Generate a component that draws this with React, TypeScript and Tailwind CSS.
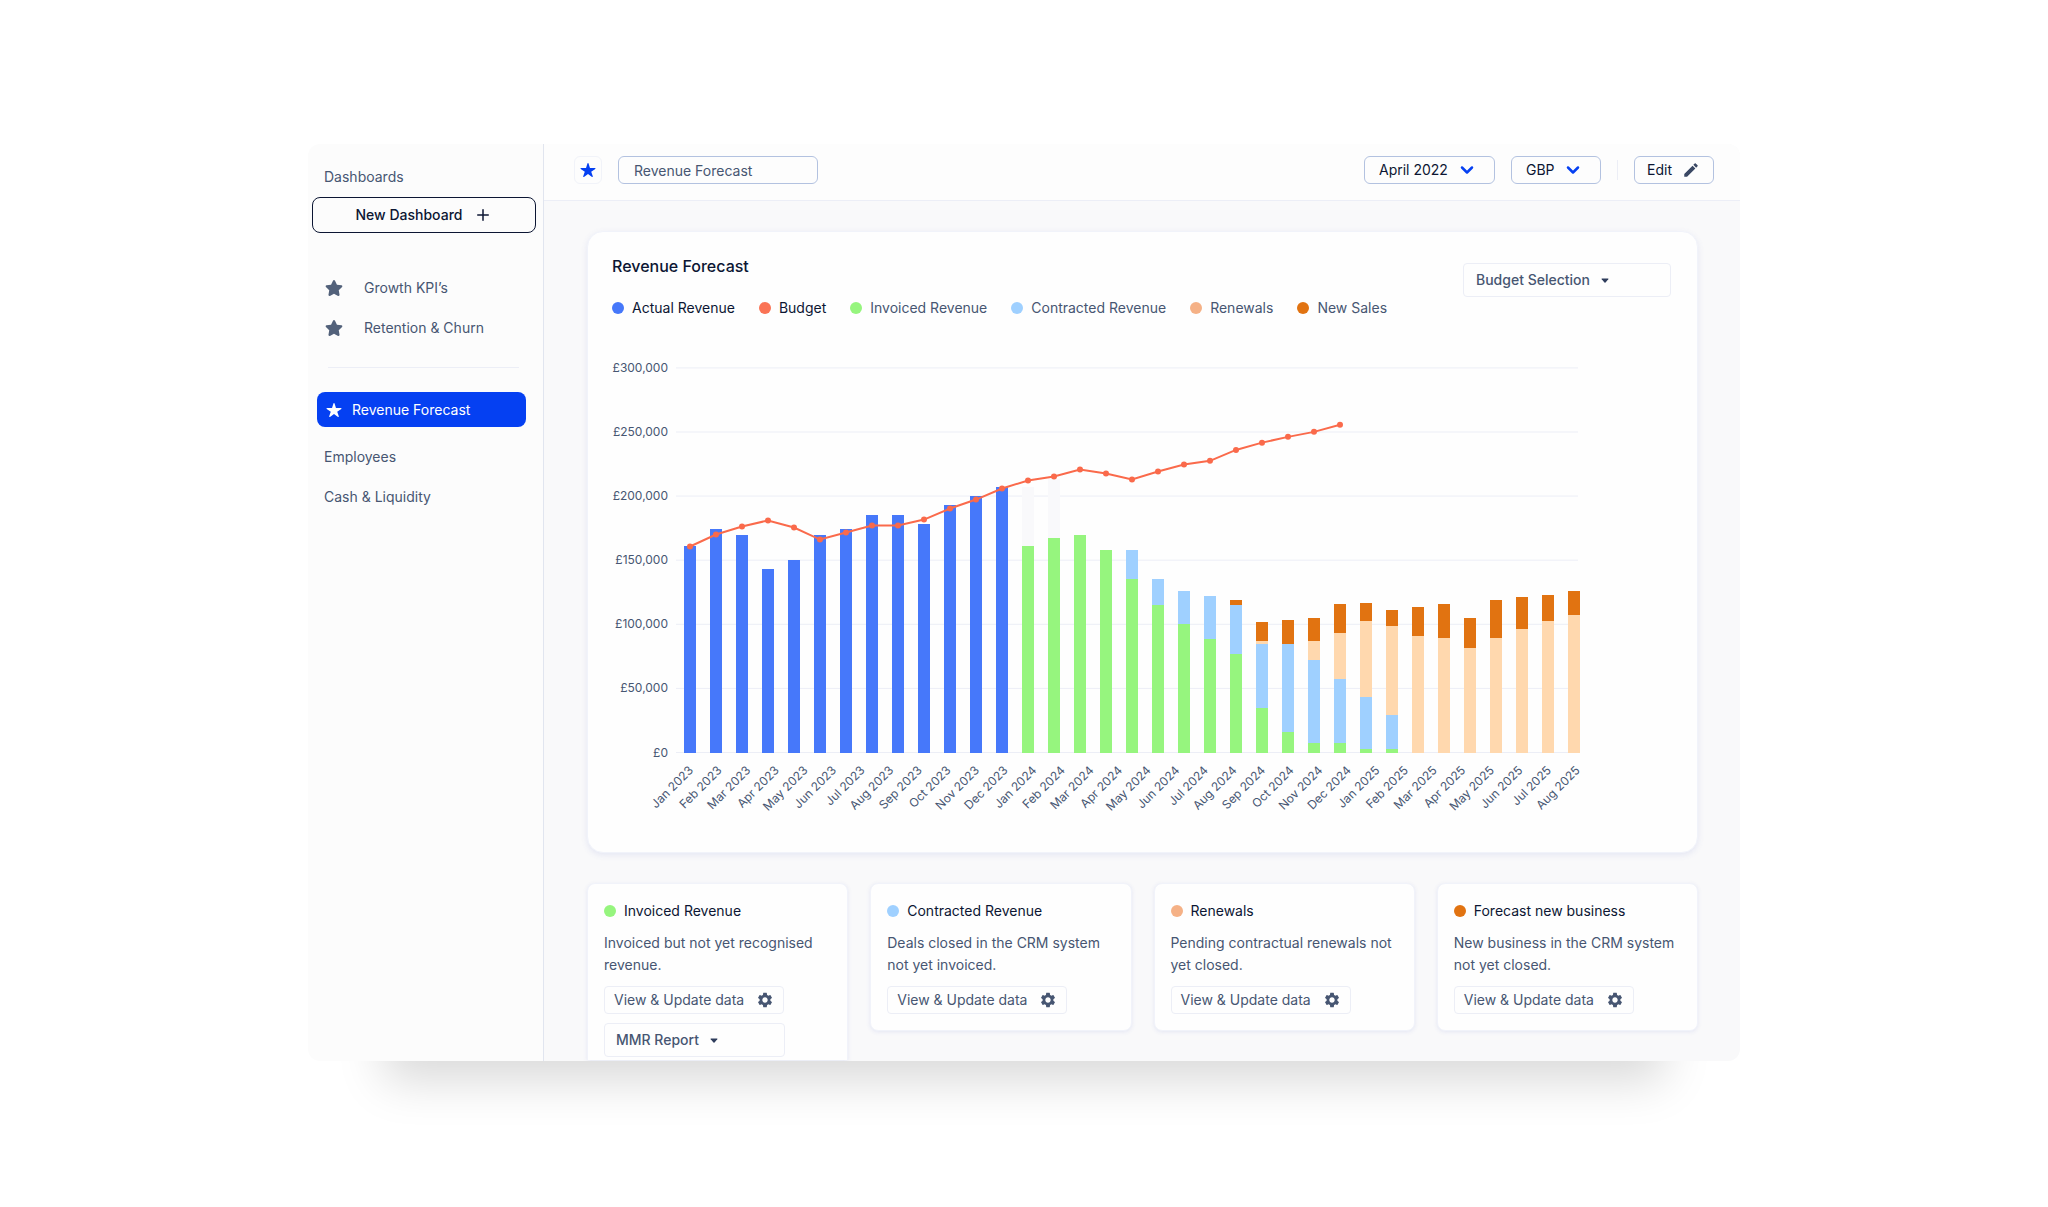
import { ChevronDown, Plus } from "lucide-react";
import { FaStar } from "react-icons/fa";
import { IoStar } from "react-icons/io5";
import { MdEdit, MdSettings } from "react-icons/md";

type Bar = {
  actual?: number;
  invoiced?: number;
  contracted?: number;
  renewals?: number;
  sales?: number;
  ghost?: number;
};

// Values are the top of each stacked segment, in thousands of pounds.
const BARS: Bar[] = [
  { actual: 160.7 },
  { actual: 174.5 },
  { actual: 170 },
  { actual: 143.5 },
  { actual: 150.5 },
  { actual: 170 },
  { actual: 174.7 },
  { actual: 184.9 },
  { actual: 184.9 },
  { actual: 178.6 },
  { actual: 193.4 },
  { actual: 199.7 },
  { actual: 207.2 },
  { invoiced: 160.7, ghost: 207 },
  { invoiced: 167.7, ghost: 213 },
  { invoiced: 169.3 },
  { invoiced: 157.6 },
  { invoiced: 135.5, contracted: 157.6 },
  { invoiced: 114.7, contracted: 135.7 },
  { invoiced: 100.4, contracted: 125.6 },
  { invoiced: 88.7, contracted: 121.7 },
  { invoiced: 77.2, contracted: 114.7, sales: 118.6 },
  { invoiced: 34.8, contracted: 85, renewals: 86.6, sales: 101.7 },
  { invoiced: 16, contracted: 85, sales: 103.7 },
  { invoiced: 7.5, contracted: 72.3, renewals: 86.6, sales: 105.3 },
  { invoiced: 7.5, contracted: 57.7, renewals: 93.6, sales: 116.2 },
  { invoiced: 3, contracted: 43.4, renewals: 102.2, sales: 117 },
  { invoiced: 3, contracted: 29, renewals: 99, sales: 111.5 },
  { renewals: 91, sales: 113.6 },
  { renewals: 89.4, sales: 116 },
  { renewals: 81.6, sales: 105 },
  { renewals: 89.4, sales: 119 },
  { renewals: 96.5, sales: 121.4 },
  { renewals: 102.7, sales: 123 },
  { renewals: 107.4, sales: 125.6 },
];

const BUDGET = [
  160.7, 170, 176.3, 181, 175.5, 166.1, 171.6, 177, 177, 181.7, 190.3, 197.3, 205.9,
  212.2, 215.3, 220.7, 217.6, 213, 219.2, 224.6, 227.5, 236, 241.7, 246.2, 250.1, 255.6,
];

const MONTHS = [
  "Jan 2023", "Feb 2023", "Mar 2023", "Apr 2023", "May 2023", "Jun 2023", "Jul 2023", "Aug 2023",
  "Sep 2023", "Oct 2023", "Nov 2023", "Dec 2023", "Jan 2024", "Feb 2024", "Mar 2024", "Apr 2024",
  "May 2024", "Jun 2024", "Jul 2024", "Aug 2024", "Sep 2024", "Oct 2024", "Nov 2024", "Dec 2024",
  "Jan 2025", "Feb 2025", "Mar 2025", "Apr 2025", "May 2025", "Jun 2025", "Jul 2025", "Aug 2025",
];

const TICKS = [300, 250, 200, 150, 100, 50, 0];

// Drawn from tallest to shortest so that each segment covers the one behind it.
const STACK = [
  { key: "ghost", fill: "#f9f9fb" },
  { key: "sales", fill: "#e17311" },
  { key: "renewals", fill: "#ffd8ae" },
  { key: "contracted", fill: "#9fd0ff" },
  { key: "invoiced", fill: "#96f57e" },
  { key: "actual", fill: "#4678fa" },
] as const;

const LEGEND = [
  { label: "Actual Revenue", dot: "bg-[#4678fa]", text: "text-[#0c1633]" },
  { label: "Budget", dot: "bg-[#fa7355]", text: "text-[#0c1633]" },
  { label: "Invoiced Revenue", dot: "bg-[#96f57e]", text: "text-[#475672]" },
  { label: "Contracted Revenue", dot: "bg-[#9fd0ff]", text: "text-[#475672]" },
  { label: "Renewals", dot: "bg-[#f5b186]", text: "text-[#475672]" },
  { label: "New Sales", dot: "bg-[#e17311]", text: "text-[#475672]" },
];

const CARDS = [
  {
    title: "Invoiced Revenue",
    dot: "bg-[#96f57e]",
    body: "Invoiced but not yet recognised revenue.",
    report: true,
  },
  {
    title: "Contracted Revenue",
    dot: "bg-[#9fd0ff]",
    body: "Deals closed in the CRM system not yet invoiced.",
  },
  {
    title: "Renewals",
    dot: "bg-[#f5b186]",
    body: "Pending contractual renewals not yet closed.",
  },
  {
    title: "Forecast new business",
    dot: "bg-[#e17311]",
    body: "New business in the CRM system not yet closed.",
  },
];

const yOf = (value: number) => 402.5 - value * 1.282;
const xOf = (index: number) => 78 + index * 26;

function RevenueChart() {
  return (
    <svg
      viewBox="0 0 1059 480"
      className="mt-8 block h-auto w-full"
      role="img"
      aria-label="Revenue forecast by month"
    >
      {TICKS.map((tick) => (
        <g key={tick}>
          <line x1={64} x2={966} y1={yOf(tick)} y2={yOf(tick)} stroke="#eceef6" />
          <text x={56} y={yOf(tick) + 4} textAnchor="end" fontSize={12} fill="#475672">
            {tick === 0 ? "£0" : `£${tick},000`}
          </text>
        </g>
      ))}
      {BARS.map((bar, i) => (
        <g key={i} shapeRendering="crispEdges">
          {STACK.map(({ key, fill }) => {
            const value = bar[key];
            if (value === undefined) return null;
            return (
              <rect
                key={key}
                x={xOf(i) - 6}
                y={yOf(value)}
                width={12}
                height={403 - yOf(value)}
                fill={fill}
              />
            );
          })}
        </g>
      ))}
      <polyline
        points={BUDGET.map((value, i) => `${xOf(i)},${yOf(value)}`).join(" ")}
        fill="none"
        stroke="#fa6a4b"
        strokeWidth={2}
      />
      {BUDGET.map((value, i) => (
        <circle key={i} cx={xOf(i)} cy={yOf(value)} r={3} fill="#fa6a4b" />
      ))}
      {MONTHS.map((month, i) => (
        <text
          key={month}
          transform={`translate(${82 + i * 28.6} 421) rotate(-45)`}
          textAnchor="end"
          fontSize={12}
          fill="#475672"
        >
          {month}
        </text>
      ))}
    </svg>
  );
}

function Caret({ className }: { className: string }) {
  return (
    <svg viewBox="0 0 8 5" className={`pointer-events-none absolute h-[5px] w-2 ${className}`}>
      <path d="M1 .5h6a.5.5 0 0 1 .3.8L4.5 4.4a.7.7 0 0 1-1 0L.7 1.3A.5.5 0 0 1 1 .5Z" fill="#2f3d5c" />
    </svg>
  );
}

function Sidebar() {
  return (
    <aside className="w-[236px] shrink-0 border-r border-[#e1e5ef] bg-[#fcfcfc] pt-[23px] text-sm leading-5 text-[#475672]">
      <h2 className="pl-4">Dashboards</h2>
      <button
        type="button"
        className="mt-[10px] ml-1 flex h-9 w-56 items-center justify-center gap-3 rounded-lg border border-[#0c1633] font-medium text-[#0c1633]"
      >
        New Dashboard
        <Plus className="size-[18px]" strokeWidth={2} />
      </button>
      <nav>
        <a href="#growth" className="mt-[45px] flex items-center gap-[21px] pl-[17px]">
          <FaStar className="size-[18px] text-[#52617a]" />
          Growth KPI’s
        </a>
        <a href="#retention" className="mt-5 flex items-center gap-[21px] pl-[17px]">
          <FaStar className="size-[18px] text-[#52617a]" />
          Retention &amp; Churn
        </a>
        <hr className="mt-[29px] mr-6 ml-5 border-[#eceef6]" />
        <a
          href="#forecast"
          aria-current="page"
          className="mt-6 mr-[17px] ml-[9px] flex h-[35px] items-center gap-[10px] rounded-lg bg-[#0540f2] pl-[9px] text-white"
        >
          <IoStar className="size-4" />
          Revenue Forecast
        </a>
        <a href="#employees" className="mt-5 block pl-4">
          Employees
        </a>
        <a href="#cash" className="mt-5 block pl-4">
          Cash &amp; Liquidity
        </a>
      </nav>
    </aside>
  );
}

function Toolbar() {
  return (
    <header className="flex h-[57px] items-center border-b border-[#eceef6] bg-[#fdfdfd] pr-[26px] pb-1 pl-[30px] text-sm text-[#0c1633]">
      <button
        type="button"
        aria-label="Favourite"
        className="flex h-7 w-7 items-center justify-center rounded-md border border-[#f1f3f9]"
      >
        <IoStar className="size-4 text-[#0540f2]" />
      </button>
      <input
        aria-label="Dashboard name"
        defaultValue="Revenue Forecast"
        className="ml-4 h-7 w-[200px] rounded-md border border-[#b3c2e0] px-[15px] text-[#475672]"
      />
      <div className="relative ml-auto">
        <select
          aria-label="Month"
          className="h-7 w-[131px] appearance-none rounded-md border border-[#b3c2e0] pl-[14px]"
        >
          <option>April 2022</option>
        </select>
        <ChevronDown
          className="pointer-events-none absolute top-1 right-[18px] size-5 text-[#0540f2]"
          strokeWidth={3}
        />
      </div>
      <div className="relative ml-4">
        <select
          aria-label="Currency"
          className="h-7 w-[90px] appearance-none rounded-md border border-[#b3c2e0] pl-[14px]"
        >
          <option>GBP</option>
        </select>
        <ChevronDown
          className="pointer-events-none absolute top-1 right-[18px] size-5 text-[#0540f2]"
          strokeWidth={3}
        />
      </div>
      <div className="mx-4 h-5 w-px bg-[#eceef6]" />
      <button
        type="button"
        className="flex h-7 w-20 items-center gap-[10px] rounded-md border border-[#b3c2e0] pl-[12px]"
      >
        Edit
        <MdEdit className="size-[18px] text-[#3a4864]" />
      </button>
    </header>
  );
}

function ChartCard() {
  return (
    <section className="rounded-2xl border border-[#f1f3fa] bg-[#fefefe] pt-[22px] pr-[26px] pb-[22px] pl-6 shadow-[0_2px_6px_rgba(80,100,200,0.12)]">
      <div className="flex justify-between">
        <div>
          <h1 className="text-base leading-6 font-medium text-[#0c1633]">Revenue Forecast</h1>
          <ul className="mt-5 flex gap-6 text-sm leading-5">
            {LEGEND.map((item) => (
              <li key={item.label} className={`flex items-center gap-2 ${item.text}`}>
                <span className={`size-3 rounded-full ${item.dot}`} />
                {item.label}
              </li>
            ))}
          </ul>
        </div>
        <div className="relative mt-[9px] h-[34px] w-52">
          <select
            aria-label="Budget selection"
            className="h-full w-full appearance-none rounded-sm border border-[#eceef6] pl-3 text-sm font-medium text-[#475672]"
          >
            <option>Budget Selection</option>
          </select>
          <Caret className="top-[15px] left-[138px]" />
        </div>
      </div>
      <RevenueChart />
    </section>
  );
}

function SourceCard({ title, dot, body, report }: (typeof CARDS)[number]) {
  return (
    <section
      className={`border border-[#f1f3fa] bg-[#fefefe] px-4 pt-[17px] text-sm shadow-[0_1px_4px_rgba(80,100,200,0.12)] ${
        report ? "rounded-t-lg border-b-0 pb-[3px]" : "mb-[30px] rounded-lg pb-4"
      }`}
    >
      <h2 className="flex items-center gap-2 leading-5 text-[#0c1633]">
        <span className={`size-3 rounded-full ${dot}`} />
        {title}
      </h2>
      <p className="mt-[11px] leading-[22px] text-[#475672]">{body}</p>
      <button
        type="button"
        className="mt-[10px] flex h-7 w-[180px] items-center justify-between rounded-sm border border-[#eceef6] pr-[9px] pl-[9px] text-[#475672]"
      >
        View &amp; Update data
        <MdSettings className="size-[18px]" />
      </button>
      {report && (
        <div className="relative mt-[9px] h-[34px] w-[181px]">
          <select
            aria-label="Report"
            className="h-full w-full appearance-none rounded-sm border border-[#eceef6] pl-[11px] font-medium text-[#475672]"
          >
            <option>MMR Report</option>
          </select>
          <Caret className="top-[15px] left-[106px]" />
        </div>
      )}
    </section>
  );
}

export default function App() {
  return (
    <div className="min-h-screen bg-white pt-36 pb-20 font-['Inter',sans-serif]">
      <div className="mx-auto max-w-[1432px] rounded-xl shadow-[0_96px_44px_-76px_rgba(0,0,0,0.15)]">
        <div className="flex overflow-hidden rounded-xl">
          <Sidebar />
          <div className="min-w-0 flex-1 bg-[#f9f9fa]">
            <Toolbar />
            <main className="pt-[30px] pr-[42px] pl-[43px]">
              <ChartCard />
              <div className="mt-[30px] grid grid-cols-4 items-start gap-[22px]">
                {CARDS.map((card) => (
                  <SourceCard key={card.title} {...card} />
                ))}
              </div>
            </main>
          </div>
        </div>
      </div>
    </div>
  );
}
